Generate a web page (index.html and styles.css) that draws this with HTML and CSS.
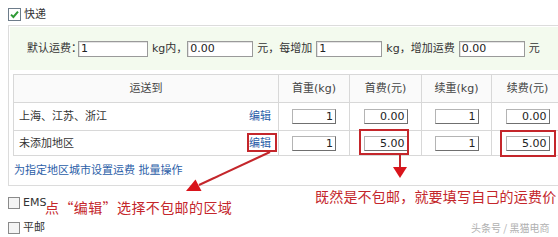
FILE: index.html
```html
<!DOCTYPE html>
<html lang="zh">
<head>
<meta charset="utf-8">
<title>运费设置</title>
<link rel="stylesheet" href="styles.css">
</head>
<body>
<div class="page">
  <div class="opt opt-main">
    <svg class="cb" width="13" height="13" viewBox="0 0 13 13"><rect x="0.5" y="0.5" width="12" height="12" fill="#fff" stroke="#6d7c8a"/><path d="M3 6.6 L5.4 9 L10 3.6" fill="none" stroke="#2f9a35" stroke-width="2"/></svg>
    <span>快递</span>
  </div>
  <div class="panel">
    <div class="defaults">
      <span>默认运费：</span><input class="in in-first" value="1"><span>kg内，</span><input class="in in-tight" value="0.00"><span>元，每增加</span><input class="in" value="1"><span>kg，增加运费</span><input class="in" value="0.00"><span>元</span>
    </div>
    <table class="rates">
      <colgroup><col class="c-area"><col class="c-w1"><col class="c-f1"><col class="c-w2"><col class="c-f2"></colgroup>
      <thead>
        <tr class="head"><th>运送到</th><th>首重(kg)</th><th>首费(元)</th><th>续重(kg)</th><th>续费(元)</th></tr>
      </thead>
      <tbody>
        <tr class="row1">
          <td class="area"><a class="edit">编辑</a><span>上海、江苏、浙江</span></td>
          <td><input class="cell" value="1"></td>
          <td><input class="cell" value="0.00"></td>
          <td><input class="cell" value="1"></td>
          <td><input class="cell" value="0.00"></td>
        </tr>
        <tr class="row2">
          <td class="area"><a class="edit">编辑</a><span>未添加地区</span></td>
          <td><input class="cell" value="1"></td>
          <td><input class="cell" value="5.00"></td>
          <td><input class="cell" value="1"></td>
          <td><input class="cell" value="5.00"></td>
        </tr>
      </tbody>
    </table>
    <div class="links"><a>为指定地区城市设置运费</a> <a>批量操作</a></div>
  </div>
  <div class="opt opt-ems">
    <svg class="cb" width="12" height="12" viewBox="0 0 12 12"><rect x="0.5" y="0.5" width="11" height="11" fill="#f4f4f4" stroke="#8a8a8a"/></svg>
    <span>EMS</span>
  </div>
  <div class="opt opt-post">
    <svg class="cb" width="12" height="12" viewBox="0 0 12 12"><rect x="0.5" y="0.5" width="11" height="11" fill="#f4f4f4" stroke="#8a8a8a"/></svg>
    <span>平邮</span>
  </div>
</div>
<svg class="overlay" width="558" height="237" viewBox="0 0 558 237">
  <g fill="none" stroke="#c4262b" stroke-width="2">
    <rect x="248" y="134" width="28" height="17"/>
    <rect x="360" y="130" width="48" height="24"/>
    <rect x="501" y="131" width="54" height="25"/>
    <line x1="270" y1="152" x2="199" y2="185"/>
    <line x1="400" y1="155" x2="400" y2="168"/>
  </g>
  <g fill="#d9141b">
    <polygon points="186,191 195.5,179.5 201.5,191"/>
    <polygon points="393,167 407,167 400,178"/>
  </g>
</svg>
<div class="note note1">点“编辑”选择不包邮的区域</div>
<div class="note note2">既然是不包邮，就要填写自己的运费价</div>
<div class="mark">头条号 / 黑猫电商</div>
</body>
</html>
```

FILE: styles.css
```css
html, body {
  margin: 0;
  padding: 0;
  overflow: hidden;
  background: #fff;
}
body {
  width: 558px;
  height: 237px;
  position: relative;
  font-family: "DejaVu Sans", "Noto Sans CJK SC", sans-serif;
  font-size: 11px;
  line-height: 13px;
  color: #333;
}
.page {
  padding: 8px 0 0 8px;
}
.opt {
  display: flex;
  align-items: center;
  gap: 3px;
  height: 13px;
}
.cb {
  display: block;
  flex: none;
}
.opt-main {
  margin-bottom: 4px;
}
.opt-ems {
  margin-top: 10px;
}
.opt-post {
  margin-top: 12px;
}
.panel {
  width: 600px;
  border: 1px solid #dcdcdc;
  border-right: none;
  padding: 1px 0 8px 1px;
}
.defaults {
  display: flex;
  align-items: center;
  height: 43px;
  padding-left: 17px;
  background: #f3faee;
  white-space: nowrap;
}
.in {
  box-sizing: border-box;
  width: 66px;
  height: 16px;
  margin: 0 4px;
  padding: 0 2px;
  border: 1px solid #9a9a9a;
  box-shadow: inset 1px 1px 0 #e4e4e4;
  font-family: "DejaVu Sans", sans-serif;
  font-size: 11px;
  color: #222;
  background: #fff;
  outline: none;
}
.in-first {
  width: 70px;
  margin-left: -4px;
}
.in-tight {
  margin-left: 0;
}
.rates {
  border-collapse: collapse;
  table-layout: fixed;
  width: 550px;
  margin: 4px 0 0 3px;
}
.c-area { width: 265px; }
.c-w1 { width: 71px; }
.c-f1 { width: 72px; }
.c-w2 { width: 70px; }
.c-f2 { width: 72px; }
.rates th,
.rates td {
  border: 1px solid #d8d8d8;
  padding: 0;
  text-align: center;
  white-space: nowrap;
}
.rates th {
  height: 27px;
  font-weight: normal;
  color: #444;
  background: #fafafa;
}
.row1 td {
  height: 27px;
}
.row2 td {
  height: 24px;
}
.rates td.area {
  text-align: left;
  padding: 0 7px 0 5px;
}
.edit {
  float: right;
  color: #2b5ea8;
  cursor: pointer;
}
.cell {
  box-sizing: border-box;
  display: block;
  width: 44px;
  height: 15px;
  margin: 0 auto;
  padding: 0 2px;
  border: 1px solid;
  border-color: #b4b4b4 #6f6f6f #6f6f6f #b4b4b4;
  font-family: "DejaVu Sans", sans-serif;
  font-size: 11px;
  text-align: right;
  color: #222;
  background: #fff;
  outline: none;
}
.links {
  margin: 8px 0 0 4px;
  color: #2b5ea8;
}
.links a {
  cursor: pointer;
}
.overlay {
  position: absolute;
  left: 0;
  top: 0;
  pointer-events: none;
}
.note {
  position: absolute;
  font-family: "Noto Sans CJK SC", sans-serif;
  font-size: 14px;
  line-height: 16px;
  color: #c4262b;
  white-space: nowrap;
}
.note1 {
  left: 45px;
  top: 199px;
  letter-spacing: 0.4px;
}
.note2 {
  left: 315px;
  top: 188px;
  letter-spacing: 0.2px;
}
.mark {
  position: absolute;
  left: 471px;
  top: 222px;
  font-family: "Noto Sans CJK SC", sans-serif;
  font-size: 10px;
  line-height: 12px;
  color: #b0b0b0;
  white-space: nowrap;
}
```
